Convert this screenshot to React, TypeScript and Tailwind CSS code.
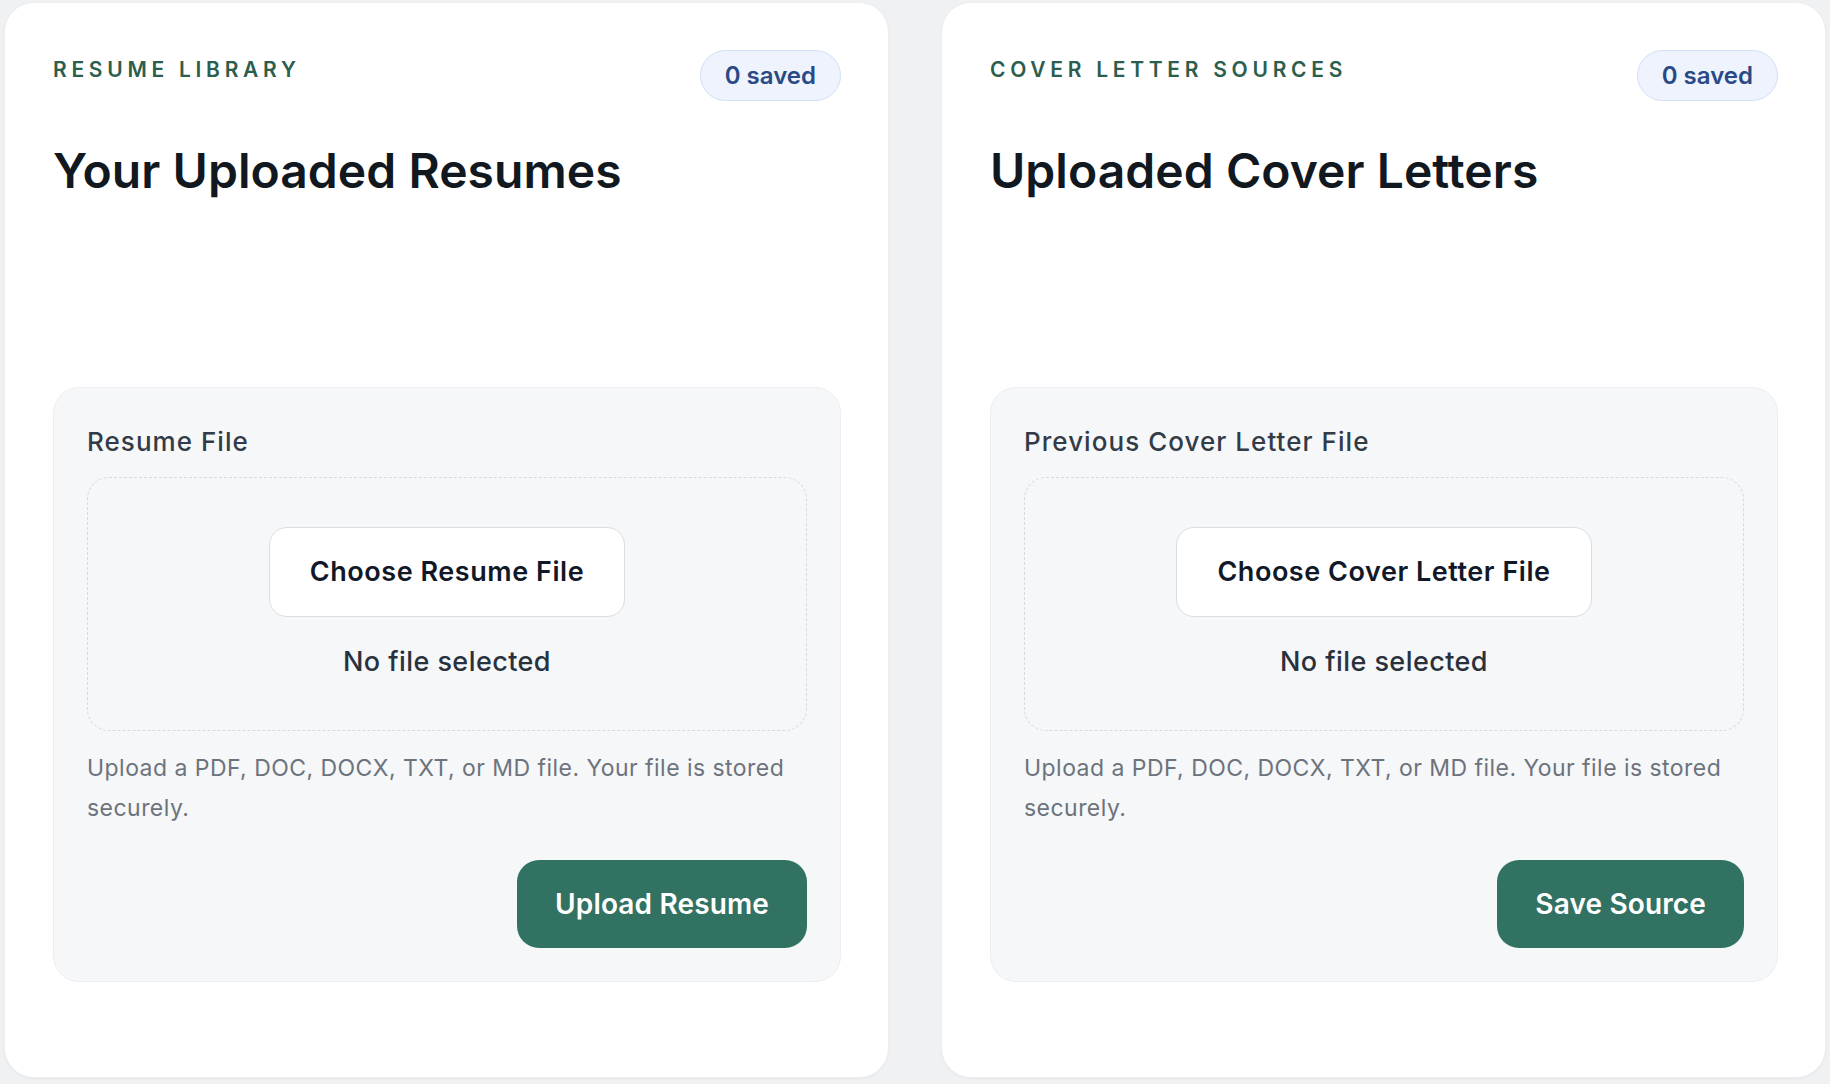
import React from 'react';

interface SourceCardProps {
  eyebrow: string;
  title: string;
  fieldLabel: string;
  chooseLabel: string;
  actionLabel: string;
}

const SourceCard = ({ eyebrow, title, fieldLabel, chooseLabel, actionLabel }: SourceCardProps) => {
  return (
    <section className="flex h-[1076px] w-[885px] shrink-0 flex-col rounded-[30px] border border-[#eceef1] bg-white pl-[48px] pr-[47px] pt-[47px] shadow-[0_1px_3px_rgba(15,23,42,0.04)]">
      {/* HEADER */}
      <div className="flex items-start justify-between">
        <span className="pt-[5px] text-[21px] font-semibold uppercase leading-[29px] tracking-[0.225em] text-[#2c5e4d]">
          {eyebrow}
        </span>
        <span className="flex h-[51px] items-center rounded-full border border-[#d3dff4] bg-[#eef3fd] px-[24px] text-[24px] font-semibold text-[#2a4a86]">
          0 saved
        </span>
      </div>

      <h2 className="mt-[41px] text-[48px] font-semibold leading-[58px] tracking-[0.001em] text-[#121820]">
        {title}
      </h2>

      {/* UPLOAD PANEL */}
      <div className="mt-[187px] flex flex-col rounded-[26px] border border-[#eceef1] bg-[#f5f7f9] px-[33px] pt-[35px] pb-[33px]">
        <label className="text-[26px] font-medium leading-[37px] tracking-[0.04em] text-[#323b46]">
          {fieldLabel}
        </label>

        <div className="mt-[17px] flex h-[254px] flex-col items-center justify-center rounded-[22px] border-[1.5px] border-dashed border-[#d6dadf]">
          <button className="flex h-[90px] items-center rounded-[18px] border-[1.5px] border-[#d9dde2] bg-white px-[40px] text-[27px] font-semibold tracking-[0.02em] text-[#111827]">
            {chooseLabel}
          </button>
          <span className="mt-[25px] text-[27px] font-medium leading-[39px] tracking-[0.016em] text-[#29313c]">
            No file selected
          </span>
        </div>

        <p className="mt-[17px] text-[23px] leading-[40px] tracking-[0.02em] text-[#6d737c]">
          Upload a PDF, DOC, DOCX, TXT, or MD file. Your file is stored securely.
        </p>

        <div className="mt-[32px] flex justify-end">
          <button className="h-[88px] rounded-[22px] bg-[#327262] px-[38px] text-[28px] font-semibold tracking-[0.005em] text-white">
            {actionLabel}
          </button>
        </div>
      </div>
    </section>
  );
};

export default function App() {
  return (
    <div
      className="flex h-[1084px] w-[1830px] gap-[52px] overflow-hidden bg-[#eff1f3] px-[4px] pt-[2px]"
      style={{ fontFamily: 'Inter, "Noto Sans", sans-serif' }}
    >
      <SourceCard
        eyebrow="Resume Library"
        title="Your Uploaded Resumes"
        fieldLabel="Resume File"
        chooseLabel="Choose Resume File"
        actionLabel="Upload Resume"
      />
      <SourceCard
        eyebrow="Cover Letter Sources"
        title="Uploaded Cover Letters"
        fieldLabel="Previous Cover Letter File"
        chooseLabel="Choose Cover Letter File"
        actionLabel="Save Source"
      />
    </div>
  );
}
